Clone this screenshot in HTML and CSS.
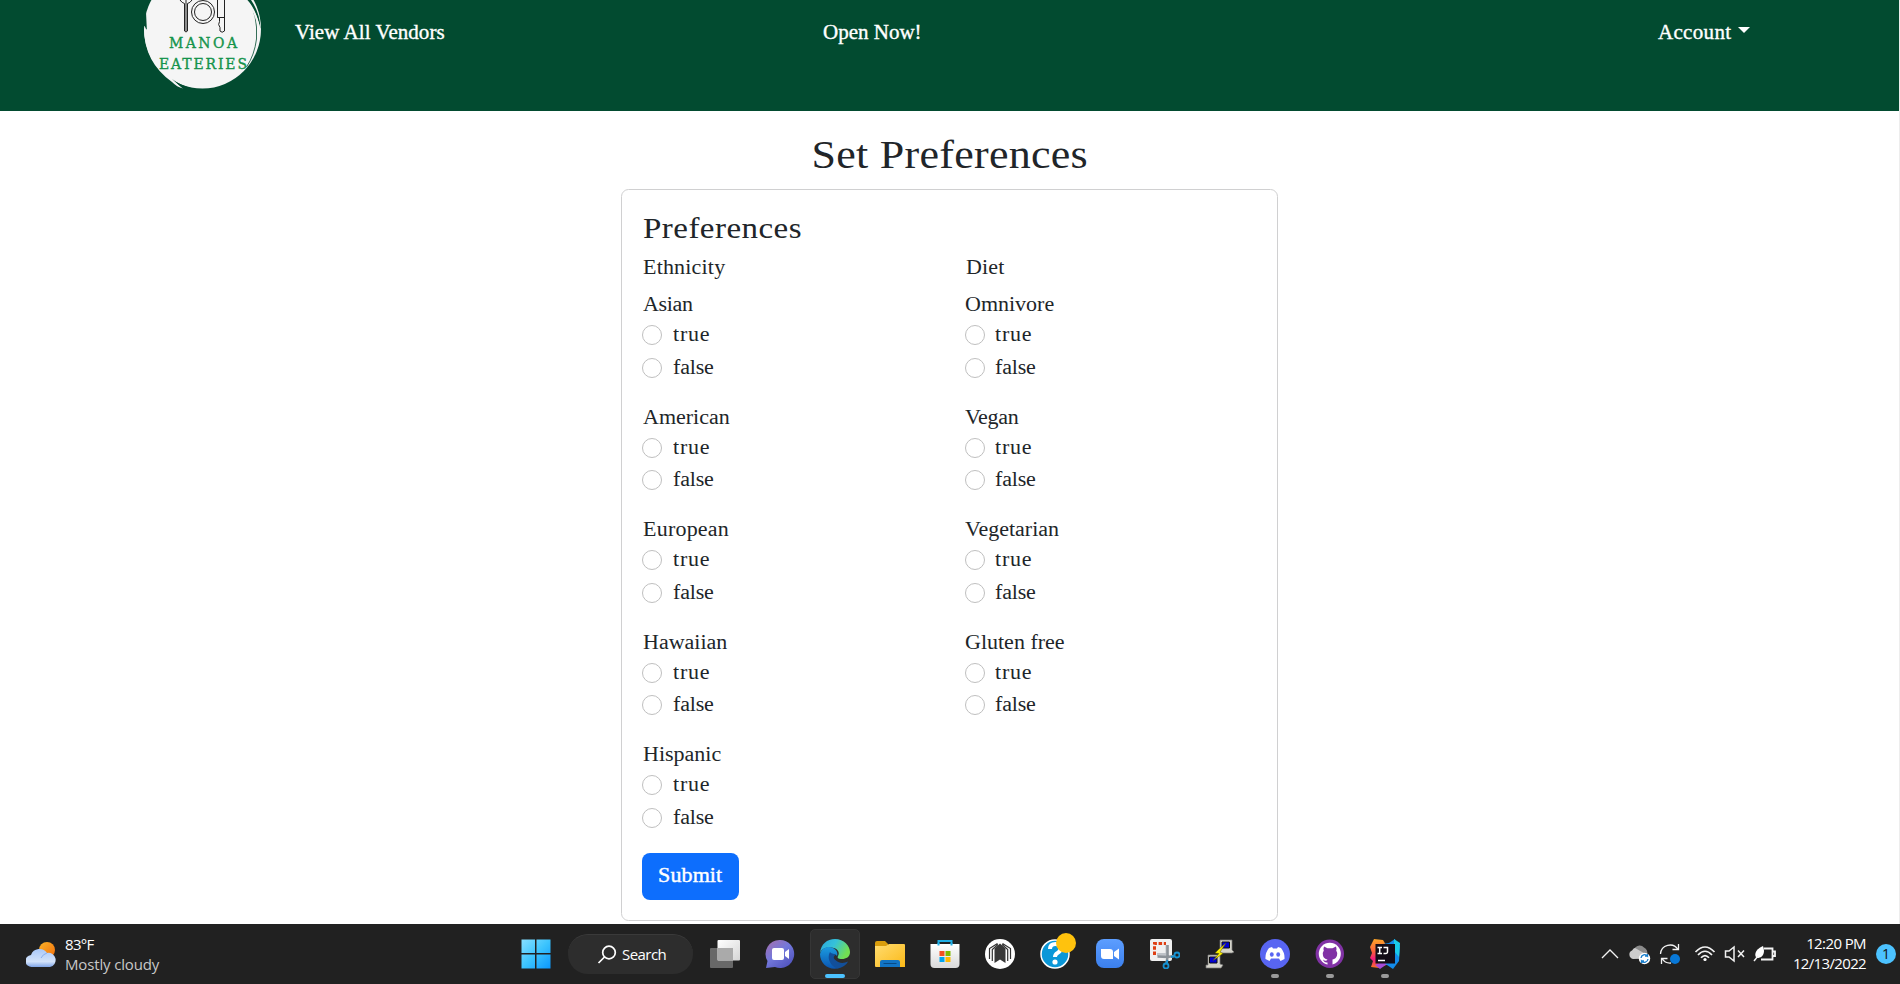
FILE: index.html
```html
<!DOCTYPE html>
<html lang="en">
<head>
<meta charset="utf-8">
<title>Manoa Eateries</title>
<link rel="stylesheet" href="styles.css">
</head>
<body>
<div class="page">
<header class="navbar">
  <svg class="logo" width="120" height="111" viewBox="142 0 120 111">
    <ellipse cx="202.5" cy="29" rx="58.5" ry="59.5" fill="#f5f5f5"/>
    <path d="M142 30 Q144 20 147 33 L146 12 L142 5Z" fill="#024b30"/>
    <path d="M144 28q0 34 28 54 5 5 11 6.500-3-2-10-9-25-20-26-50z" fill="#f5f5f5"/>
    <path d="M172 79q9 7 21 9.300L186 89q-8-4-14-10z" fill="#024b30"/>
    <path d="M252 7q4 10 4.500 20v12q-2 16-10 28" fill="none" stroke="#024b30" stroke-width=".8"/>
    <path d="M246 0l5 0q9 13 9.500 29Q256 9 246 0z" fill="#024b30"/>
    <path d="M246 0q9 9 13 28" fill="none" stroke="#f5f5f5" stroke-width="2"/>
    <g fill="none" stroke="#222" stroke-width="1">
      <circle cx="203" cy="12" r="11.500"/><circle cx="203" cy="12" r="8.500"/>
      <path d="M180 0q2 3 4.500 3.500V31q1.500 2 3 0V3.500Q190 3 192 0M186 0V31M217.500 0v17.500h2v4q-2 3 .5 6v3.500q2 2.500 4.500 0V0M217.500 17.500h7"/>
    </g>
    <g class="logo-text">
      <text x="169" y="47.500" textLength="68">MANOA</text>
      <text x="159" y="69.300" textLength="88">EATERIES</text>
    </g>
  </svg>
  <nav class="links">
    <a class="vendors"><span class="wide">View All Vendors</span></a>
    <a class="open"><span class="wide">Open Now!</span></a>
    <a class="account"><span class="wide">Account</span><span class="caret"></span></a>
  </nav>
</header>
<main>
  <h2><span class="wide">Set Preferences</span></h2>
  <form class="card">
    <h4><span class="wide">Preferences</span></h4>
    <div class="columns">
      <section>
        <h6><span class="wide">Ethnicity</span></h6>
        <div class="group"><div class="name tight"><span class="wide">Asian</span></div><label class="t"><input type="radio"><span class="wide">true</span></label><label class="f"><input type="radio"><span class="wide">false</span></label></div>
        <div class="group"><div class="name"><span class="wide">American</span></div><label class="t"><input type="radio"><span class="wide">true</span></label><label class="f"><input type="radio"><span class="wide">false</span></label></div>
        <div class="group"><div class="name loose"><span class="wide">European</span></div><label class="t"><input type="radio"><span class="wide">true</span></label><label class="f"><input type="radio"><span class="wide">false</span></label></div>
        <div class="group"><div class="name"><span class="wide">Hawaiian</span></div><label class="t"><input type="radio"><span class="wide">true</span></label><label class="f"><input type="radio"><span class="wide">false</span></label></div>
        <div class="group"><div class="name"><span class="wide">Hispanic</span></div><label class="t"><input type="radio"><span class="wide">true</span></label><label class="f"><input type="radio"><span class="wide">false</span></label></div>
      </section>
      <section>
        <h6><span class="wide">Diet</span></h6>
        <div class="group"><div class="name"><span class="wide">Omnivore</span></div><label class="t"><input type="radio"><span class="wide">true</span></label><label class="f"><input type="radio"><span class="wide">false</span></label></div>
        <div class="group"><div class="name tight"><span class="wide">Vegan</span></div><label class="t"><input type="radio"><span class="wide">true</span></label><label class="f"><input type="radio"><span class="wide">false</span></label></div>
        <div class="group"><div class="name"><span class="wide">Vegetarian</span></div><label class="t"><input type="radio"><span class="wide">true</span></label><label class="f"><input type="radio"><span class="wide">false</span></label></div>
        <div class="group"><div class="name"><span class="wide">Gluten free</span></div><label class="t"><input type="radio"><span class="wide">true</span></label><label class="f"><input type="radio"><span class="wide">false</span></label></div>
      </section>
    </div>
    <button type="button" class="submit"><span class="wide">Submit</span></button>
  </form>
</main>
</div>
<footer class="taskbar">
  <div class="weather">
    <svg width="30" height="26" viewBox="0 0 30 26">
      <defs><linearGradient id="sun" x2="1" y2="1"><stop stop-color="#fcb427"/><stop offset="1" stop-color="#f26d0c"/></linearGradient>
      <linearGradient id="cl" x2="0" y2="1"><stop stop-color="#a9c8fa"/><stop offset=".7" stop-color="#d3e3fa"/><stop offset="1" stop-color="#7fa5e8"/></linearGradient></defs>
      <circle cx="21" cy="8" r="8" fill="url(#sun)"/>
      <path d="M6 25a6 6 0 0 1-1-12A9 9 0 0 1 21 11a7 7 0 0 1 3 14z" fill="url(#cl)"/>
      <path d="M15 16q2-4 6-5" fill="none" stroke="#86aef0"/>
    </svg>
    <div class="wtext"><span class="temp">83°F</span><span class="cond">Mostly cloudy</span></div>
  </div>
  <div class="apps">
    <div class="app"><svg width="30" height="30" viewBox="0 0 30 30"><defs><linearGradient id="win" gradientUnits="userSpaceOnUse" x1="0" y1="0" x2="30" y2="30"><stop stop-color="#8be0ff"/><stop offset=".5" stop-color="#3cc4fd"/><stop offset="1" stop-color="#0995fd"/></linearGradient></defs><path d="M.5.5H14V14H.5zM15.500.5H29.500V14H15.500zM.5 15.500H14V29.500H.5zM15.500 15.500h14v14h-14z" fill="url(#win)"/></svg></div>
    <div class="search"><svg width="20" height="20" viewBox="0 0 20 20" fill="none" stroke="#fff" stroke-width="1.700"><circle cx="12" cy="7.500" r="6.300"/><path d="M7.500 12 1.500 18"/></svg><span>Search</span></div>
    <div class="app"><svg width="30" height="30" viewBox="0 0 30 30"><defs><linearGradient id="tv" x2="1" y2="1"><stop stop-color="#fff"/><stop offset="1" stop-color="#d5d5d5"/></linearGradient></defs><rect y="9" width="23" height="20" rx="1" fill="#686868"/><rect x="7.500" y="1" width="22.500" height="20.500" rx="1" fill="url(#tv)"/><path d="M7.500 9H23v12.500H7.500z" fill="#aaa"/></svg></div>
    <div class="app"><svg width="30" height="30" viewBox="0 0 30 30"><defs><linearGradient id="chat" x2=".8" y2="1"><stop stop-color="#a86eab"/><stop offset=".5" stop-color="#7378db"/><stop offset="1" stop-color="#4f52bd"/></linearGradient></defs><path d="M15 1a14 14 0 1 1-5 27L1 29l1.500-7A14 14 0 0 1 15 1z" fill="url(#chat)"/><rect x="7" y="9" width="12" height="12" rx="2" fill="#fff"/><path d="M20 13l4-3v10l-4-3z" fill="#fff"/></svg></div>
    <div class="app active"><svg width="30" height="30" viewBox="0 0 30 30"><defs><linearGradient id="e1" x2="1" y2=".4"><stop stop-color="#2aa7dc"/><stop offset=".5" stop-color="#35c1da"/><stop offset="1" stop-color="#72e052"/></linearGradient><linearGradient id="e2" x2="0" y2="1"><stop stop-color="#1b9be0"/><stop offset="1" stop-color="#0b55b0"/></linearGradient></defs><path d="M0 14C1 5 7 0 15 0c9 0 15 7 15 13 0 5-4 7-8 7-4 0-5-1-4-3 2-3 0-7-4-8C8 7 2 9 0 14z" fill="url(#e1)"/><path d="M0 15C2 8 9 7 13 9c4 2 5 5 4 8-2-2-5-2-6 1-2 5 3 9 8 11C9 32 0 25 0 15z" fill="url(#e2)"/><path d="M10 13c-3 5-1 13 7 16.500 5-.5 9-3 11-7-4 2-9 2-12-1-3-2-3-4 0-6-3-1-5-1-6-2.500z" fill="#124f9a"/></svg><i></i></div>
    <div class="app"><svg width="30" height="30" viewBox="0 0 30 30"><defs><linearGradient id="fo" x2="1" y2="1"><stop stop-color="#ffdc70"/><stop offset="1" stop-color="#fbb917"/></linearGradient></defs><path d="M0 4q0-2 2-2h8l3 3v5H0z" fill="#d99d0c"/><path d="M0 7h11l3-2h15q1 0 1 1v22H1q-1 0-1-1z" fill="url(#fo)"/><path d="M5 28v-5q0-2 2-2h16q2 0 2 2v5z" fill="#1174c5"/><path d="M8.500 24.500h13" stroke="#084a86" stroke-width="1"/></svg></div>
    <div class="app"><svg width="30" height="30" viewBox="0 0 30 30"><defs><linearGradient id="st" x2="0" y2="1"><stop stop-color="#fff"/><stop offset="1" stop-color="#d9d9d9"/></linearGradient></defs><path d="M8.500 7V2h13v5" fill="none" stroke="#1faee5" stroke-width="2"/><path d="M.5 5h29v20q0 4-4 4h-21q-4 0-4-4z" fill="url(#st)"/><path d="M8.500 4V6.500M21.500 4V6.500" stroke="#1faee5" stroke-width="2"/><path d="M9.500 12h5v5h-5z" fill="#f25022"/><path d="M15.500 12h5v5h-5z" fill="#7fba00"/><path d="M9.500 18h5v5h-5z" fill="#00a4ef"/><path d="M15.500 18h5v5h-5z" fill="#ffb900"/></svg></div>
    <div class="app"><svg width="30" height="30" viewBox="0 0 30 30"><circle cx="15" cy="15" r="15" fill="#fff"/><path d="M9.500 24V9.500L15 4.500l5.500 5V24L15 20.500z" fill="#383838"/><path d="M4.500 20V9.500L12.500 4.500M25.500 20V9.500L17.500 4.500M7.300 22V10.500L13 5.500M22.700 22V10.500L17 5.500" fill="none" stroke="#303030" stroke-width="1.200"/></svg></div>
    <div class="app"><svg class="help" width="36" height="36" viewBox="0 0 36 36"><circle cx="15" cy="21" r="14" fill="#0a97d8" stroke="#fff" stroke-width="1.500"/><path d="M10 16q0-5 5.500-5 5 0 5 4.500 0 3-3 4.500-2.500 1.300-2.500 4" fill="none" stroke="#fff" stroke-width="4"/><circle cx="15" cy="29" r="2.600" fill="#fff"/><circle cx="26" cy="10" r="10" fill="#ffc20d"/></svg></div>
    <div class="app"><svg width="30" height="30" viewBox="0 0 30 30"><defs><linearGradient id="zm" x2="0" y2="1"><stop stop-color="#5d9eff"/><stop offset="1" stop-color="#3b80ee"/></linearGradient></defs><rect x="1" width="28" height="29" rx="8" fill="url(#zm)"/><path d="M6 10h9q3 0 3 3v7H9q-3 0-3-3zM19 13l5-3.500v11L19 17z" fill="#fff"/></svg></div>
    <div class="app"><svg width="30" height="30" viewBox="0 0 30 30"><rect width="22" height="22" rx="2" fill="#f0f0f0"/><path d="M4.500 16V4.500H16" fill="none" stroke="#df3e12" stroke-width="3" stroke-dasharray="3.500 1.700"/><path d="M7 15.500h10V6" fill="none" stroke="#bfc3c8" stroke-width="3"/><path d="M17.500 6v12L24 17M17.500 18l-10-.5M17.500 18l-1 6" fill="none" stroke="#8c9298" stroke-width="2.500"/><circle cx="27" cy="16" r="2.500" fill="none" stroke="#1591d1" stroke-width="1.800"/><circle cx="16" cy="27" r="2.500" fill="none" stroke="#1591d1" stroke-width="1.800"/><path d="M21 18l4-1M17.500 21l-1 4" stroke="#1591d1" stroke-width="2"/></svg></div>
    <div class="app"><svg width="30" height="30" viewBox="0 0 30 30"><path d="M15 1h12v10l2 2-2 1H13l2-3zM3 16h12v9l3 1-2 3H1v-3h2z" fill="#d4d3ca" stroke="#777" stroke-width=".7"/><path d="M17 3h7.500v6H17zM4.500 18H12v6H4.500z" fill="#0000d4" stroke="#111"/><path d="M21 4l-7 6-4 4 4 .5-6 7 10-7-3-1.500z" fill="#fff200" stroke="#555000" stroke-width=".5"/></svg></div>
    <div class="app run"><svg width="30" height="30" viewBox="0 0 30 30"><circle cx="15" cy="15" r="15" fill="#5865f2"/><path d="M9 9l3-1 1 1.500h4L18 8l3 1q4 5 3.500 11l-4 2-1.500-2.500h-8L9.500 22l-4-2Q5 14 9 9z" fill="#fff"/><ellipse cx="11.800" cy="15.500" rx="1.900" ry="2.200" fill="#5865f2"/><ellipse cx="18.200" cy="15.500" rx="1.900" ry="2.200" fill="#5865f2"/></svg><i></i></div>
    <div class="app run"><svg width="30" height="30" viewBox="0 0 30 30"><circle cx="14.800" cy="14.800" r="14.200" fill="#8132a5"/><circle cx="14.800" cy="14.800" r="11" fill="#fff"/><path d="M9 7.500l3.500 1.800h5L21 7.500q.8 2 .2 4 1.500 2 .8 5-1 3.500-4.500 4v5.500h-5v-2.500Q9 24 8 20.500q3 2.500 4.500 0Q8.500 19.500 8 16.500q-.7-3 .8-5-.6-2 .2-4z" fill="#8132a5"/></svg><i></i></div>
    <div class="app run"><svg width="30" height="30" viewBox="0 0 30 30"><defs><linearGradient id="ijl" x2="0" y2="1"><stop stop-color="#fca528"/><stop offset=".45" stop-color="#fb5c3e"/><stop offset=".7" stop-color="#f01880"/><stop offset="1" stop-color="#fb7a1e"/></linearGradient></defs><path d="M4 0l9 1 3 5v20l-7 3-8-1 2-6-3-3 2-5-2-6z" fill="url(#ijl)"/><path d="M13 5l6-1 6-4 1 4 4 3-1 15-6 8-6-4H9l4-6z" fill="#138bea"/><path d="M24 0l6 4-1 14-5-6z" fill="#19cae9"/><path d="M5 26l7-3 5 2-7 5z" fill="#a54bd8"/><rect x="5.500" y="5" width="19.500" height="19.500" fill="#120d18"/><path d="M7.500 8.500h4.500M9.700 8.500v6M7.500 14.500H12M13.500 8.500h4v4.500q0 2-4 1.500M8 21.500h7" fill="none" stroke="#fff" stroke-width="1.500"/></svg><i></i></div>
  </div>
  <div class="tray">
    <svg width="184" height="32" viewBox="1600 938 184 32" fill="none" stroke="#f3f3f3" stroke-width="1.300">
      <path d="M1602 958l8-8 8 8"/>
      <path d="M1633 959a4.500 4.500 0 0 1-1-8.500 6 6 0 0 1 9-2 6 6 0 0 1 6 7v3z" fill="#ccc" stroke="none"/><path d="M1635 948a5.500 5.500 0 0 1 9-.5 5.500 5.500 0 0 1 3 7l-4-2z" fill="#8b8b8b" stroke="none"/>
      <circle cx="1644.500" cy="958.500" r="5.700" fill="#fff" stroke="none"/><path d="M1641 958a3.700 3.700 0 0 1 6.500-2v-2M1648 959a3.700 3.700 0 0 1-6.500 2v2M1645 956h3M1641 961h3" stroke="#167dcc"/>
      <path d="M1660.500 954a9.500 9.500 0 0 1 17.500-4.500M1678.500 944v5.500h-6M1671 963a9.500 9.500 0 0 1-9-4.500M1661.500 964v-5.500h6"/><circle cx="1675" cy="959" r="5" fill="#0878d8" stroke="none"/>
      <path d="M1695.500 952q9.500-10 19 0M1698 955q7-7.500 14 0M1701 957.800q4-4.500 8 0" stroke-width="1.700"/><circle cx="1705" cy="959.500" r="1.600" fill="#fff" stroke="none"/>
      <path d="M1725.500 951h3.500l5-4v14l-5-4h-3.500zM1738 950.500l6 6.500M1744 950.500l-6 6.500" stroke-width="1.500"/>
      <path d="M1764 948.500h8.500v11H1761M1773 951.500h2v4.500h-2" stroke-width="1.800"/><path d="M1763 946q2 5 0 9-2 3.500-5.500 3-3-1-2-5 1-4 7.500-7z" fill="#fff" stroke="none"/><path d="M1754 961l4-5" stroke-width="1.500"/>
    </svg>
    <div class="clock"><span class="time">12:20 PM</span><span class="date">12/13/2022</span></div>
    <div class="count">1</div>
  </div>
</footer>
</body>
</html>
```
FILE: styles.css
```css
* { box-sizing: border-box; }
body {
  margin: 0;
  width: 1900px;
  height: 984px;
  overflow: hidden;
  display: flex;
  flex-direction: column;
  background: #fff;
  color: #212529;
  font: 20px/30px "Liberation Serif", serif;
}
.page { height: 924px; border-right: 1px solid #ededed; }
.wide {
  display: inline-block;
  transform: scaleX(1.1);
  transform-origin: left;
  white-space: nowrap;
}
.navbar {
  display: flex;
  height: 111px;
  padding-left: 142px;
  background: #024b30;
}
.logo { display: block; flex: none; }
.logo-text {
  fill: #14934b;
  stroke: #14934b;
  stroke-width: .35px;
  font: 15.5px "DejaVu Serif", serif;
  font-stretch: condensed;
}
.links {
  display: flex;
  width: 1455px;
  margin-left: 33px;
  padding-top: 17px;
  color: #fff;
  -webkit-text-stroke: .35px #fff;
}
.links .wide { transform: scaleX(1.05); }
.vendors { width: 528px; letter-spacing: .05px; }
.open { flex: 1; }
.account { width: 92px; letter-spacing: .3px; }
.account .wide { width: 74px; }
.caret {
  display: inline-block;
  margin-left: 6px;
  vertical-align: 6px;
  border: 6px solid transparent;
  border-top-color: #fff;
  border-bottom: 0;
}
main {
  display: flex;
  flex-direction: column;
  align-items: center;
  padding-top: 20px;
}
h2, h4, h6 { margin: 0 0 10px; font-weight: 400; }
h2 { font-size: 40px; line-height: 48px; letter-spacing: .25px; }
h2 .wide { transform-origin: center; }
h4 { font-size: 30px; line-height: 36px; letter-spacing: .42px; padding-left: 1px; }
h6 { height: 24px; font-size: 20px; line-height: 22px; letter-spacing: .17px; padding-left: 1px; }
.card {
  width: 657px;
  height: 732px;
  padding: 20px;
  border: 1px solid #d0d0d1;
  border-radius: 7.5px;
}
.columns { display: grid; grid-template-columns: 322.5px 1fr; }
.group { height: 112.5px; }
.name { height: 30px; line-height: 28px; padding-left: .7px; }
.tight { letter-spacing: -.3px; }
.loose { letter-spacing: .2px; }
label { display: flex; height: 30px; line-height: 28px; margin-bottom: 2.5px; }
.t { letter-spacing: .7px; }
.f { letter-spacing: -.15px; }
input {
  appearance: none;
  width: 20px;
  height: 20px;
  margin: 5px 10.5px 0 0;
  border: 1px solid #bfbfbf;
  border-radius: 50%;
}
.submit {
  display: block;
  width: 97px;
  height: 47px;
  padding: 0 0 2px;
  border: 0;
  border-radius: 8px;
  background: #0d6efd;
  color: #fff;
  font: 20px/30px "Liberation Serif", serif;
  letter-spacing: .1px;
  -webkit-text-stroke: .4px #fff;
}
.submit .wide { transform-origin: center; }
.taskbar {
  display: flex;
  height: 60px;
  background: #212121;
  color: #fff;
  font: 15px/20px "Open Sans", "Noto Sans", sans-serif;
}
.weather { display: flex; width: 508.5px; padding: 18px 0 0 26px; }
.wtext { display: flex; flex-direction: column; margin: -8px 0 0 9px; }
.temp { letter-spacing: -.7px; }
.cond { color: #c8c8c8; letter-spacing: -.15px; }
.apps { display: flex; align-items: center; }
.app {
  position: relative;
  display: flex;
  width: 55px;
  height: 60px;
  justify-content: center;
  align-items: center;
}
.search {
  display: flex;
  width: 125px;
  height: 40px;
  margin: 0 4.5px;
  padding-left: 29px;
  align-items: center;
  gap: 5px;
  border-radius: 20px;
  border-top: 1px solid #3a3a3a;
  background: #2d2d2d;
  letter-spacing: -.55px;
}
.search span { padding-bottom: 1px; }
.app.active {
  width: 50px;
  height: 50px;
  margin: 0 2.5px;
  border: 1px solid #363636;
  border-radius: 5px;
  background: #2d2d2d;
}
.help { margin: -6px 0 0 6px; }
.app i {
  position: absolute;
  bottom: 6px;
  width: 8px;
  height: 4px;
  border-radius: 2px;
  background: #9a9a9a;
}
.active i { bottom: 0; width: 20px; background: #4cc2ff; }
.tray { display: flex; flex: 1; justify-content: flex-end; padding-right: 4px; align-items: center; }
.clock {
  display: flex;
  width: 82px;
  flex-direction: column;
  align-items: flex-end;
  padding-bottom: 2px;
}
.time { letter-spacing: -.6px; }
.date { letter-spacing: -.65px; }
.count {
  width: 20px;
  height: 20px;
  margin-left: 10px;
  border-radius: 50%;
  background: #4cc2ff;
  color: #111;
  text-align: center;
  font-size: 14px;
}
```
